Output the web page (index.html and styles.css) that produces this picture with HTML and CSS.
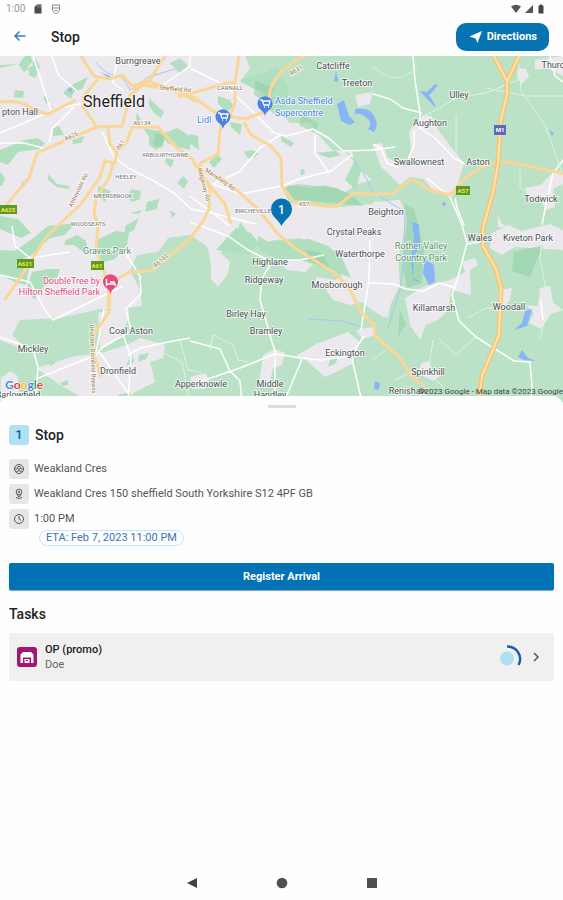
FILE: index.html
```html
<!DOCTYPE html>
<html lang="en">
<head>
<meta charset="utf-8">
<meta name="viewport" content="width=device-width, initial-scale=1">
<title>Stop</title>
<link rel="stylesheet" href="styles.css">
</head>
<body>
<div class="status">
  <span class="status-time">1:00</span>
  <svg class="status-icon" viewBox="0 0 10 10" aria-hidden="true"><path fill="#4a4a4a" d="M4 .5h4.500v9H1.500V3z"/><path stroke="#aaa" stroke-width=".7" d="M4.500 1.500v2M6 1.500v2M7.500 1.500v2"/></svg>
  <svg class="status-icon shield" viewBox="0 0 10 10" aria-hidden="true"><path fill="none" stroke="#888" d="M1.500 1h7v5c0 2-3.500 3.500-3.500 3.500S1.500 8 1.500 6zM2 4h6M3.500 6.500h3"/></svg>
  <span class="spacer"></span>
  <svg class="status-icon wide" viewBox="0 0 12 10" aria-hidden="true"><path fill="#555" d="M1 2.500Q6-1 11 2.500L6 9z"/></svg>
  <svg class="status-icon" viewBox="0 0 10 10" aria-hidden="true"><path fill="#555" d="M9 1v8H1z"/></svg>
  <svg class="status-icon" viewBox="0 0 10 10" aria-hidden="true"><path fill="#444" d="M4 .5h2V1.500h1.500v8h-5v-8H4z"/></svg>
</div>
<header class="appbar">
  <button class="back" aria-label="Back"><svg viewBox="0 0 14 14"><path fill="none" stroke="#3479c4" stroke-width="1.500" d="M12.500 6H2M6.500 1.500L2 6l4.500 4.500"/></svg></button>
  <h1>Stop</h1>
  <button class="directions"><svg viewBox="0 0 14 14" aria-hidden="true"><path fill="#fff" d="M13 1L8.500 13 6.500 8.500 .5 6.500z"/></svg>Directions</button>
</header>
<svg class="map" viewBox="0 56 563 346" preserveAspectRatio="xMidYMid slice" role="img" aria-label="Map of Sheffield">
  <rect y="56" width="563" height="346" fill="#bbe2c6"/>
  <g class="urban">
    <path d="M0 56H245L250 68 240 82 262 92 272 108 290 123 310 123 320 137 332 150 352 152 355 165 372 180 358 184 345 192 325 185 308 188 290 185 283 190 290 203 330 208 372 204 402 208 404 232 396 270 388 318 372 310 362 302 350 305 333 300 325 288 313 287 317 277 335 280 342 276 335 260 323 247 300 238 275 240 258 244 240 236 224 240 223 250 215 257 205 245 190 235 168 238 158 252 137 255 130 270 140 290 142 306 120 309 100 309 60 318 20 320 0 335Z"/>
    <path d="M0 335L20 320 12 335 30 352 0 340zM36 368L75 356 98 354 127 345 140 338 165 345 163 358 150 362 155 382 135 392 125 402H90L60 385zM98 313L128 303 129 318 120 336 100 350z"/>
    <path d="M409 132L423 115 432 116 438 130 455 152 464 163 456 190 452 197 432 190 424 179 410 177 400 185 381 167 373 145 382 143 388 158 405 167 411 150z"/>
    <path d="M373 202L400 200 408 218 398 255 400 285 384 318 373 310zM405 298L425 286 450 280 465 272 462 262 475 258 478 265 470 270 471 295 451 290 448 310 438 320 426 325 420 340 410 325z"/>
    <path d="M490 234L508 225 522 231 550 224 563 230V250L515 247 502 255 490 248zM535 60l28-4v20l-16-8-12 2zM518 68l8 1 3 8-8 7-4-8zM525 188l16-3 13-14 9 1v12l-10 5 2 18-9 3-8-14-9 2zM540 288l10-2 3 16 10 8-12 4-10 15-12-6 5-10-8-8 12 1zM498 290l14-2-2 12-7 8-4-1zM296 356l20-12 32-12 12 10-8 22-20 10-7 3-19-17zM263 355l12-6 10 4-3 12-9 3-4 18-10-2zM208 249l25-4-13 7 10 10-2 12-10 13-7-8 0-14zM1 378l9-7 8 5 2 26H0zM356 330l16-3 4 8-14 4zM282 264l15-5 16 5-8 8-18-2zM421 363l8-2 3 9 8 6-7 5-14-7zM498 214l3 9 6 4-9 0zM190 377l16-4 3 8-5 8h-12zM355 95l18-3-3 12-12 3z"/>
  </g>
  <g class="park">
    <path d="M0 68l18-4 6 8 9-7-2-9h-6l-6 8-19 1zM28 66l8-7 4 8-5 11-6-3zM15 90l9 1-1 7-9-1zM70 86l18-9-6 12-8 3-3 7-8-6zM45 96l4 4-2 4-4-6zM53 128l6-2 5 9-11 1zM72 140l13-4-4 7-8 1zM0 150l25-10 12-2 8 5-5 6-22 3-10 13-8-3zM149 98l6 6 9 8-3 6-8-6-4-7zM137 112l4 8-6 6zM143 128l10 2 8 1 5 8-9 11-8-5 0-8zM163 134l14-6 13 8v14l-12-3-11-4zM48 174l9 10 13 2-2 3-11-2-9-7zM98 186l13 5-6 11-7-5zM132 189l9 2-1 8-8 3-6-6zM166 158l8 2-3 8-6-6zM183 176l5 5-4 8-7-6zM0 172l5 6-3 8-2 0zM21 182l6-2-2 6zM0 216l18 3 13 14-10 5-21-9zM48 226l28-3-12 12-14 3-22 20-16-5 20-14zM98 239l18-8 13 2-2 12-12 14-15 4-4-12zM66 240l11-5 9 6 2 12-6-2-8-6-10 0zM0 250l18 1 12 12-4 22-9-2-17-8zM32 272l16-3 12 0-4 12-12 5-10 14-7-12zM170 210l6 4-4 4zM125 226l14-8-5 12-9 5zM147 202l12-3-2 10-12 3zM130 213l12-3-3 4z"/>
    <path d="M218 96l12 4 4 8-8 3-8-7zM230 122l12 2-2 11-9-8zM190 134l8 2 1 14-9-6zM254 158l-6 0-4-6 8-2 7 3zM281 136l8 4 5 3-3 4-10-6zM316 153l20-2 5 4-12 3zM300 170l4-1 1 4-4 3zM209 162l8-8 5 5-8 9zM240 80l20-6 18-8 5 12 6 10-2 15-10 14-10-10 0-14-15-5zM216 250l20-22 15 5 8 10-10 12zM345 180l10-20 6 10-5 20zM258 236l11 6 40-3 19 7 14 12 9 20-20-9-13-7-42-3-18-10zM240 222l11 14-4 6-10-8zM48 362l3-2 5 3-6 3zM60 383l8-3 0 5-6 1zM118 395l12-3 2 8-10 2zM139 355l10-2-3 6-8 3zM126 366l6-12 2 8zM330 359l8-4-2 8-8 4z"/>
  </g>
  <g class="wood">
    <path d="M285 187l13-3 39 4 14 7 13 11-40-4-35-3zM405 204l9 5 10 40-2 34-15 5-4-20 3-34zM255 81l20 7-8 14-13-7zM302 115l17 8-4 10-16-8zM514 252l29-7-13 32-18-6zM306 250l15 3 9 14-8 0-14-6zM170 63l10-5 8 8-8 8zM156 133l8 3-1 12-10-3zM400 310l6 14-8 13z" opacity=".5"/>
  </g>
  <g class="water">
    <path d="M337 104l7-4 5 16 6 6-5 3-9-4zM355 109q12-2 18 5 7 11 1 18l-6-3q5-6-1-11-6-5-12-4zM336 71l2 9-1 2-3-1zM373 115q5 5 0 14z"/>
    <path d="M420 91l7 1 8-8 3 1-5 6-4 4 5 8 2 5-10-10zM412 222l7 2 1 22-6 10-1 22 9 5-9-3-2-20 3-22zM425 259l9 6 1 17-6 3-6-12zM525 311l7-2-5 17-13 4 8-7zM522 350l6 8 8 3-12-1-6-3zM375 381l5 2-1 7-5-1zM549 130l5 3-2 3zM67 89l5-1-1 5zM100 72l10 4 1 3zM442 203l3-1 1 3-3 1z"/>
  </g>
  <g class="stream"><path d="M96 63q12 13 19 12t15 15l18-13 27-8M345 150q20 22 28 42l32 20-1 40-4 38-12 38M308 319l34 2 20 6"/></g>
  <g class="lane">
    <path d="M0 133l35-15 22-9 27-6M33 56l8 24 10 31M52 56l7 20 18 15M49 143l3-14 22-22M0 143l24 0 19 5M102 132l12 25 14 11 26 13 20 12 17 16 25 5 40 10M118 56l-5 27 10 7M163 85l27-19 0-10M190 68l36 18 26 25 22 22 12 3 27-7 17 10 13 12 30-1 22-3M282 134l-21 13-22 25-26 12 27 10 42-8 17-7 32-8 22-17M315 135l0 18 14 20M190 196l40 30M0 275l30 7 15 28 8 10 70-34M0 337l33 12 5 18-2 26M36 379l60-24 7-8 28-16-5-22 15-15-1-18-14-22-15-5M98 350l30 43M104 309l-8 44M123 335l8 21-3 46M128 355l12-7 28-6 22-4M12 226l3 20 15 12 40-6M190 222l38 14 20 14 20 10 32 0 24-5M270 265l-8 13-2 22 12 42 4 12 25 4 20 2 30-4 13-20M190 341l30 8 10 22 10 10 2 21M190 385l50-17 35-14 0 36-10 12M302 359l-18 43M352 359l10 43M361 330l8-50 1-40"/>
    <path d="M373 94l17 5 13 9 19 5M413 56l2 24 5 33 0 15 16 11 18 19 11 6M414 130l0 16-6 13M373 144l8 4 6 15 12 5M427 178l23 19 12 28 5 18-9 34-6 18 7 26 17 16 38 24 16 1 2 24-1 12M369 283l25 1 12 5 18 2 15-8 17 5M455 198l2 10 7 17M550 56l5 20 8 6M563 160l-10 14-7 30-4 21M541 300l2 20M467 244l20-3"/>
  </g>
  <g class="lane thin">
    <path d="M373 66q18 19 35 8l10-5M420 118q20-10 36-20l30-5 34-14M518 56l3 35 24 34 18 50M456 115l0 40M486 88l40 8 37 0M520 170l0 18 10 7M543 229l-3 30 5 25 0 35-5 20M468 318l18-10 21 0M438 338l18 17 22-20M433 340l-5 33 20 18M395 380l30-14M190 402l-8-40-20-10M210 350l3-15 20 10 5 15 10 2M373 360l12-10M180 340l8 30 14 2"/>
  </g>
  <g class="road-edge">
    <path id="r1" d="M81 56l13 20 16 3 12-4 14 15 9-10 14 5 22 7 8 2 24 17 20 6 12 2 22-8 3-20q8-25 40-37M98 79L84 96 83 107 97 127 122 126 130 95 150 80 165 56M0 102q20-2 28 4t20 8l28-14M97 127l-33 14-27 12-8 25-12 14-16 20M108 127l2 17 7 8 10-10 5-15 26 0 18 20 17 13 7 14 25 30 6 20M117 151l-2 12-10-2-5 16-19 27-34 32-22 34-20 30M113 163l-3 13-14 23-2 14 4 12-2 24 14 40-1 23-16 24 0 16 8 25M108 308l1-24 20-12 22-1 14-12 25-20 13-18 6-12 1-20-12-22"/>
    <path id="r2" d="M134 84l30 4 20 6 12 8M178 97l46-13 11-2 4-26M235 80l0 23-5 13-6 4-4 10-2 24-17 9-4 8M244 122l7 13 20 11 10 12 1 28 12 16 42 5 18-14 18 1 20 0 20-15 18 11 20 5 14-16 23-15 22-2 56 12M197 169l28 11 32 28 22 27 16 13 38 24 15 14 14 27 13 13 0 10 25 22 12 19 12 9"/>
  </g>
  <g class="road"><use href="#r1"/><use href="#r2"/></g>
  <g class="motorway-edge"><path d="M494 56l13 25 0 14-6 24-3 45-5 28-10 36 0 18 13 23 5 19-2 47-17 41-3 26M519 56l-12 26"/></g>
  <g class="motorway"><path d="M494 56l13 25 0 14-6 24-3 45-5 28-10 36 0 18 13 23 5 19-2 47-17 41-3 26M519 56l-12 26"/></g>
  <g class="shields">
    <rect x="0" y="205" width="17" height="9"/><rect x="17" y="259" width="17" height="9"/><rect x="91" y="261" width="13" height="9"/><rect x="456" y="186" width="14" height="9"/><rect class="blue" x="494" y="125" width="12" height="10"/>
    <text x="8" y="212">A625</text><text x="25" y="266">A621</text><text x="97" y="268">A61</text><text x="463" y="193">A57</text><text class="white" x="500" y="132">M1</text>
  </g>
  <g class="labels">
    <text class="city" x="114" y="107">Sheffield</text>
    <text x="138" y="64">Burngreave</text><text x="20" y="115">pton Hall</text><text x="333" y="69">Catcliffe</text><text x="357" y="86">Treeton</text><text x="459" y="98">Ulley</text><text x="430" y="126">Aughton</text><text x="419" y="165">Swallownest</text><text x="478" y="165">Aston</text><text x="541" y="202">Todwick</text><text x="553" y="68">Thurc</text>
    <text x="386" y="215">Beighton</text><text x="354" y="235">Crystal Peaks</text><text x="360" y="257">Waterthorpe</text><text x="337" y="288">Mosborough</text><text x="270" y="265">Highlane</text><text x="264" y="283">Ridgeway</text><text x="246" y="317">Birley Hay</text><text x="266" y="334">Bramley</text><text x="345" y="356">Eckington</text><text x="201" y="387">Apperknowle</text><text x="270" y="387">Middle</text><text x="270" y="398">Handley</text>
    <text x="480" y="241">Wales</text><text x="528" y="241">Kiveton Park</text><text x="434" y="311">Killamarsh</text><text x="509" y="310">Woodall</text><text x="428" y="375">Spinkhill</text><text x="408" y="394">Renishaw</text><text x="131" y="334">Coal Aston</text><text x="33" y="352">Mickley</text><text x="118" y="374">Dronfield</text><text x="18" y="398">Barlowfield</text>
    <g class="district"><text x="165" y="157">ARBOURTHORNE</text><text x="126" y="179">HEELEY</text><text x="113" y="198">MEERSBROOK</text><text x="88" y="226">WOODSEATS</text><text x="230" y="90">CARNALL</text><text x="253" y="213">BIRCHEVILLE</text></g>
    <g class="parkname"><text x="107" y="254">Graves Park</text><text x="421" y="249">Rother Valley</text><text x="421" y="261">Country Park</text></g>
    <g class="roadname"><text transform="translate(72 138) rotate(-24)">A625</text><text transform="translate(142 125)">A6134</text><text transform="translate(122 146) rotate(-55)">A61</text><text transform="translate(80 191) rotate(-64)">Abbeydale Rd</text><text transform="translate(175 91) rotate(5)">Sheffield Rd</text><text transform="translate(219 181) rotate(35)">Mansfield Rd</text><text transform="translate(202 185) rotate(75)">Ridgeway Rd</text><text transform="translate(304 206)">A57</text><text transform="translate(162 262) rotate(-42)">A6102</text><text transform="translate(91 359) rotate(88)">Unstone-Dronfield Bypass</text><text transform="translate(297 72) rotate(-30)">A631</text></g>
    <g class="shop"><text x="275" y="104">Asda Sheffield</text><text x="275" y="116">Supercentre</text><text x="197" y="123">Lidl</text></g>
    <g class="hotel"><text x="100" y="284">DoubleTree by</text><text x="100" y="295">Hilton Sheffield Park</text></g>
  </g>
  <g fill="#4a83e8"><path d="M265 116q-1-4-4-6a7.500 7.500 0 1 1 8 0q-3 2-4 6z"/><path d="M223 129q-1-4-4-6a7.500 7.500 0 1 1 8 0q-3 2-4 6z"/></g>
  <g fill="none" stroke="#fff" stroke-width="1.300"><path d="M260 100h2l2 5h5l1-4h-7M264 107h1M268 107h1"/><path d="M218 113h2l2 5h5l1-4h-7M222 120h1M226 120h1"/></g>
  <path fill="#e64b80" d="M110.500 294q-1-4-4-6a7.500 7.500 0 1 1 8 0q-3 2-4 6z"/><path fill="none" stroke="#fff" stroke-width="1.400" d="M106.500 279v7M107 284h8v2M110 282h4v2"/>
  <path fill="#0873b2" d="M281.500 226C279 220 271 217 271 209a10.500 10.500 0 0 1 21 0c0 8-8 11-10.500 17z"/>
  <text class="pin-number" x="281.500" y="214">1</text>
  <text class="google" x="5" y="389"><tspan fill="#4285f4">G</tspan><tspan fill="#ea4335">o</tspan><tspan fill="#fbbc05">o</tspan><tspan fill="#4285f4">g</tspan><tspan fill="#34a853">l</tspan><tspan fill="#ea4335">e</tspan></text>
  <text class="credit" x="563" y="394">©2023 Google - Map data ©2023 Google</text>
</svg>
<main class="sheet">
  <div class="handle"></div>
  <div class="title"><span class="number">1</span><h2>Stop</h2></div>
  <ul class="details">
    <li><span class="tile"><svg viewBox="0 0 12 12" aria-hidden="true"><circle cx="6" cy="6" r="4.500"/><circle cx="6" cy="4.800" r="1.500"/><path d="M3 9q3-3 6 0M1.500 6H4M8 6h2.500"/></svg></span><span>Weakland Cres</span></li>
    <li><span class="tile"><svg viewBox="0 0 12 12" aria-hidden="true"><circle cx="6" cy="4" r="2.800"/><circle cx="6" cy="4" r=".7"/><path d="M4 6.500L6 9l2-2.500M3 9.500q3 2 6 0"/></svg></span><span>Weakland Cres 150 sheffield South Yorkshire S12 4PF GB</span></li>
    <li><span class="tile"><svg viewBox="0 0 12 12" aria-hidden="true"><circle cx="6" cy="6" r="4.500"/><path d="M6 3v3l2 1.500"/></svg></span><span>1:00 PM</span></li>
  </ul>
  <span class="eta">ETA: Feb 7, 2023 11:00 PM</span>
  <button class="register">Register Arrival</button>
  <h3>Tasks</h3>
  <a class="task" href="#">
    <svg class="warehouse" viewBox="0 0 20 20" aria-hidden="true"><rect width="20" height="20" rx="3" fill="#a6146f"/><path fill="#fff" d="M3.500 16V7.500L6 5h8l2.500 2.500V16H14v-5.500H6V16z"/><path fill="#fff" d="M7.500 12h5v4h-5z"/><path fill="#a6146f" d="M9 13h2v1H9z"/></svg>
    <span class="task-text"><strong>OP (promo)</strong><span>Doe</span></span>
    <svg class="progress" viewBox="0 0 24 24" aria-hidden="true"><circle cx="9" cy="13.500" r="7" fill="#afdff2"/><path fill="none" stroke="#1c5fa8" stroke-width="2.500" d="M9 1.500A12.500 12.500 0 0 1 20.500 20"/></svg>
    <svg class="chevron" viewBox="0 0 10 12" aria-hidden="true"><path fill="none" stroke="#555" stroke-width="1.500" d="M3 2l4 4-4 4"/></svg>
  </a>
</main>
<nav class="system">
  <button aria-label="Back"><svg viewBox="0 0 12 12"><path fill="#444" d="M11 1v10L1 6z"/></svg></button>
  <button aria-label="Home"><svg viewBox="0 0 12 12"><circle cx="6" cy="6" r="5.300" fill="#505050"/></svg></button>
  <button aria-label="Recents"><svg viewBox="0 0 12 12"><path fill="#505050" d="M1 1h10v10H1z"/></svg></button>
</nav>
</body>
</html>
```
FILE: styles.css
```css
* { box-sizing: border-box; }
body {
  margin: 0;
  min-height: 100vh;
  display: flex;
  flex-direction: column;
  background: #fefefe;
  color: #222;
  font-family: Roboto, "Liberation Sans", sans-serif;
  font-size: 11px;
  line-height: 14px;
}
button { border: 0; padding: 0; background: none; font: inherit; cursor: pointer; }
h1, h2, h3 { margin: 0; font-weight: 500; }
svg { display: block; flex: none; }

.status { display: flex; align-items: center; gap: 2px; height: 18px; padding: 0 17px 0 6px; }
.status-time { margin-right: 6px; color: #999; font-size: 10px; }
.status-icon { width: 10px; height: 10px; }
.status-icon.wide { width: 12px; }
.status-icon.shield { margin-left: 6px; }
.spacer { flex: 1; }

.appbar { display: flex; align-items: center; height: 38px; padding: 0 14px 0 13px; }
.back { width: 14px; margin-right: 24px; }
.back svg { width: 14px; height: 14px; }
.appbar h1 { flex: 1; font-size: 14px; line-height: 18px; }
.directions {
  display: flex; align-items: center; gap: 4px;
  height: 28px; padding: 0 12px 0 13px;
  border-radius: 10px; background: #0873b3; color: #fff; font-weight: 700;
}
.directions svg { width: 14px; height: 14px; }

.map { width: 100%; aspect-ratio: 563 / 346; }
.urban { fill: #ebe9ed; }
.park { fill: #b0dfbf; }
.wood { fill: #89cda2; }
.water { fill: #8ab4f8; }
.stream { fill: none; stroke: #a4c8f2; stroke-width: 1; }
.lane { fill: none; stroke: #fff; stroke-width: 1.5; stroke-linejoin: round; }
.lane.thin { stroke: #dff1e5; stroke-width: 1; }
.road-edge { fill: none; stroke: #f4d7a0; stroke-width: 3; stroke-linejoin: round; }
.road { fill: none; stroke: #fcd694; stroke-width: 2; stroke-linejoin: round; }
.motorway-edge { fill: none; stroke: #f5c577; stroke-width: 5; stroke-linejoin: round; }
.motorway { fill: none; stroke: #fde2ac; stroke-width: 2; stroke-linejoin: round; }
.labels { fill: #4c4f52; font-size: 9px; text-anchor: middle; }
.labels text { paint-order: stroke; stroke: #ffffffaa; stroke-width: 2px; }
.labels .city { fill: #222; font-size: 16px; }
.district { fill: #777; font-size: 6px; }
.parkname { fill: #5d9273; }
.roadname { fill: #987952; font-size: 6px; }
.shop { fill: #4a83e8; text-anchor: start; }
.hotel { fill: #e64b80; text-anchor: end; }
.shields { fill: #5d9a24; font-size: 6px; font-weight: 700; text-anchor: middle; }
.shields text { fill: #f5e84c; }
.shields .blue { fill: #5b69bd; }
.shields .white { fill: #fff; }
.pin-number { fill: #fff; font-size: 12px; font-weight: 500; text-anchor: middle; }
.google { font-family: Lato, sans-serif; font-size: 12px; font-weight: 700; paint-order: stroke; stroke: #fff; stroke-width: 1px; }
.credit { fill: #444; font-size: 8px; text-anchor: end; }

.sheet {
  position: relative;
  flex: 1;
  margin-top: -6px;
  padding: 9px 9px 16px;
  border-radius: 10px 10px 0 0;
  background: #fefefe;
}
.handle { width: 28px; height: 3px; margin: 0 auto; background: #ddd; }
.title { display: flex; align-items: center; gap: 6px; margin-top: 17px; }
.number {
  width: 20px; height: 20px; border-radius: 3px;
  background: #afe1f5; color: #0b5f9e;
  font-size: 13px; font-weight: 500; line-height: 20px; text-align: center;
}
.title h2, h3 { font-size: 14px; line-height: 18px; }
.details { margin: 14px 0 0; padding: 0; list-style: none; display: grid; gap: 5px; color: #555; }
.details li { display: flex; align-items: center; gap: 5px; }
.tile { display: grid; place-items: center; width: 20px; height: 20px; border-radius: 3px; background: #e6e6e6; }
.tile svg { width: 12px; height: 12px; fill: none; stroke: #555; }
.eta {
  display: block; width: fit-content; margin: 1px 0 0 30px; padding: 0 6px;
  border: 1px solid #c4e8f8; border-radius: 8px; color: #3d72b4;
}
.register {
  display: block; width: 100%; height: 27px; margin-top: 17px;
  border-radius: 2px; background: #0072b5; color: #fff; font-weight: 700;
  box-shadow: 0 1px 1px #8299b0;
}
h3 { margin-top: 15px; }
.task {
  display: flex; align-items: center; min-height: 48px; margin-top: 10px; padding: 0 13px 0 8px;
  border-radius: 2px; background: #f0f0f0; color: inherit; text-decoration: none;
}
.warehouse { width: 20px; height: 20px; margin-right: 8px; }
.task-text { flex: 1; display: grid; color: #666; line-height: 15px; }
.task-text strong { color: #222; font-weight: 500; }
.progress { width: 24px; height: 24px; margin-right: 9px; }
.chevron { width: 10px; height: 12px; }

.system { display: flex; justify-content: center; gap: 78px; padding: 10px 0 11px; }
.system svg { width: 12px; height: 12px; }
```
